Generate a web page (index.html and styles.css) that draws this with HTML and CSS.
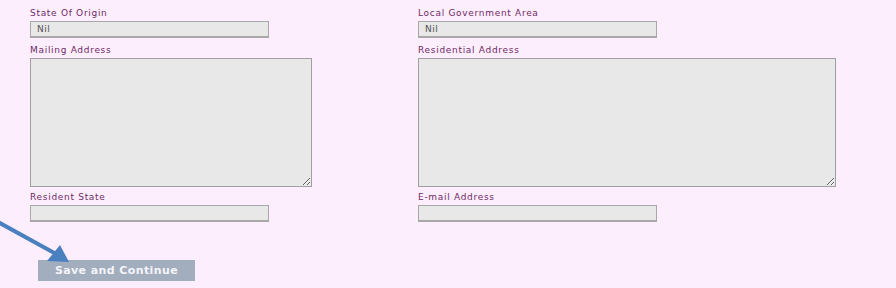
FILE: index.html
```html
<!DOCTYPE html>
<html lang="en">
<head>
    <meta charset="UTF-8">
    <title>Contact Details</title>
    <link rel="stylesheet" href="styles.css">
</head>
<body>
    <div class="form">
        <div class="grid">
            <div class="field">
                <label class="label">State Of Origin</label>
                <input class="text" type="text" value="Nil">
            </div>
            <div class="field">
                <label class="label">Local Government Area</label>
                <input class="text" type="text" value="Nil">
            </div>
            <div class="field">
                <label class="label">Mailing Address</label>
                <textarea class="area small"></textarea>
            </div>
            <div class="field">
                <label class="label">Residential Address</label>
                <textarea class="area wide"></textarea>
            </div>
            <div class="field">
                <label class="label">Resident State</label>
                <input class="text" type="text">
            </div>
            <div class="field">
                <label class="label">E-mail Address</label>
                <input class="text" type="text">
            </div>
        </div>
        <div class="actions">
            <button class="btn">Save and Continue</button>
        </div>
    </div>

    <!-- annotation arrow pointing at the button -->
    <svg class="arrow" width="80" height="50" viewBox="0 0 80 50">
        <line x1="-2" y1="4" x2="58" y2="37" stroke="#4a7fc0" stroke-width="4" stroke-linecap="round"/>
        <polygon points="69,44 47,43 60,27" fill="#4a7fc0"/>
    </svg>
</body>
</html>
```

FILE: styles.css
```css
body {
    margin: 0;
    background-color: #fdeefd;
    font-family: "DejaVu Sans", Verdana, sans-serif;
    width: 896px;
    height: 288px;
    overflow: hidden;
    position: relative;
}
.form {
    padding: 8px 0 0 30px;
}
.grid {
    display: grid;
    grid-template-columns: 388px 420px;
}
.field {
    display: flex;
    flex-direction: column;
    align-items: flex-start;
}
.label {
    font-size: 9px;
    line-height: 11px;
    color: #6e2a64;
    letter-spacing: 0.7px;
    margin-bottom: 2px;
}
.text {
    box-sizing: border-box;
    width: 239px;
    height: 17px;
    margin: 0 0 7px 0;
    padding: 0 0 0 6px;
    background: #e8e8e8;
    border: 1px solid #a8a8a8;
    border-bottom-width: 2px;
    font-family: inherit;
    font-size: 9px;
    letter-spacing: 0.5px;
    color: #555;
    outline: none;
}
.area {
    box-sizing: border-box;
    height: 129px;
    margin: 0 0 5px 0;
    background: #e8e8e8;
    border: 1px solid #a0a0a0;
    resize: both;
}
.small {
    width: 282px;
}
.wide {
    width: 418px;
}
.actions {
    padding: 30px 0 0 8px;
}
.btn {
    width: 157px;
    height: 21px;
    border: none;
    background: #a2adbe;
    color: #f4f4f8;
    font-family: inherit;
    font-weight: bold;
    font-size: 11px;
    letter-spacing: 0.4px;
    padding: 0;
}
.arrow {
    position: absolute;
    left: 0;
    top: 218px;
}
```
